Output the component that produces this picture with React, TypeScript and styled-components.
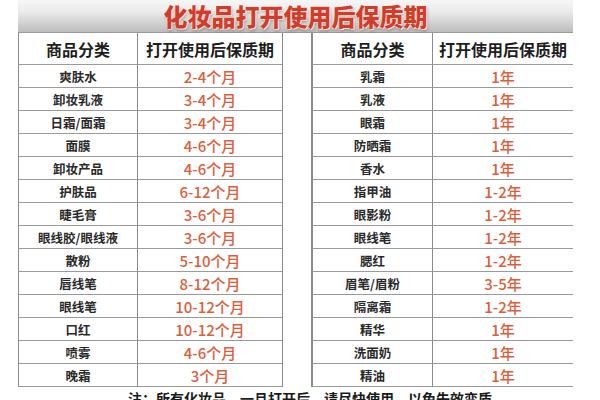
import React from 'react';
import styled, { createGlobalStyle } from 'styled-components';

const GlobalStyle = createGlobalStyle`
  html, body {
    margin: 0;
    padding: 0;
    background: #ffffff;
  }
  body {
    font-family: "Noto Sans CJK SC", "Noto Sans", sans-serif;
  }
`;

const Page = styled.div`
  width: 600px;
  height: 400px;
  overflow: hidden;
  padding-left: 18px;
  box-sizing: border-box;
`;

const Banner = styled.div`
  width: 555px;
  height: 33px;
  box-sizing: border-box;
  border-bottom: 1px solid #9a9a9a;
  background: linear-gradient(to bottom, #f6f6f6 0%, #ececec 35%, #cfcfcf 75%, #bcbcbc 100%);
  display: flex;
  align-items: center;
  justify-content: center;
`;

const Title = styled.h1`
  margin: 0;
  font-size: 24px;
  line-height: 30px;
  font-weight: 900;
  color: #d23d2a;
  text-shadow: 0 0 1px #ffffff, 0 0 2px #ffffff, 1px 1px 0 #f4d6cf, 1px 2px 3px rgba(0, 0, 0, 0.35);
`;

const Grid = styled.div`
  width: 555px;
  display: grid;
  grid-template-columns: 119px 145px 30px 120px 141px;
  grid-template-rows: 32px repeat(14, 23px);
`;

type Kind = 'head' | 'name' | 'value' | 'gap';

const Cell = styled.div<{ $kind: Kind; $first?: boolean }>`
  box-sizing: border-box;
  display: flex;
  align-items: center;
  justify-content: center;
  white-space: nowrap;
  border-left: ${(p) => (p.$first ? '1px solid #8a8a8a' : p.$kind === 'gap' ? '1px solid #8a8a8a' : 'none')};
  border-right: ${(p) => (p.$kind === 'gap' ? '1px solid #8a8a8a' : 'none')};
  border-bottom: ${(p) => (p.$kind === 'gap' ? 'none' : '1px solid #9a9a9a')};
  & + & {
    border-left: ${(p) => (p.$kind === 'value' || p.$kind === 'head' ? '1px solid #8a8a8a' : undefined)};
  }
  font-size: ${(p) => (p.$kind === 'head' ? '16px' : p.$kind === 'value' ? '15px' : '12.5px')};
  font-weight: ${(p) => (p.$kind === 'value' ? 500 : 700)};
  color: ${(p) => (p.$kind === 'value' ? '#d9603c' : p.$kind === 'head' ? '#1e1e1e' : '#2a2a2a')};
`;

const Note = styled.p`
  margin: 2px 0 0 110px;
  font-size: 14px;
  line-height: 18px;
  font-weight: 700;
  color: #1a1a1a;
`;

const left: [string, string][] = [
  ['爽肤水', '2-4个月'],
  ['卸妆乳液', '3-4个月'],
  ['日霜/面霜', '3-4个月'],
  ['面膜', '4-6个月'],
  ['卸妆产品', '4-6个月'],
  ['护肤品', '6-12个月'],
  ['睫毛膏', '3-6个月'],
  ['眼线胶/眼线液', '3-6个月'],
  ['散粉', '5-10个月'],
  ['唇线笔', '8-12个月'],
  ['眼线笔', '10-12个月'],
  ['口红', '10-12个月'],
  ['喷雾', '4-6个月'],
  ['晚霜', '3个月'],
];

const right: [string, string][] = [
  ['乳霜', '1年'],
  ['乳液', '1年'],
  ['眼霜', '1年'],
  ['防晒霜', '1年'],
  ['香水', '1年'],
  ['指甲油', '1-2年'],
  ['眼影粉', '1-2年'],
  ['眼线笔', '1-2年'],
  ['腮红', '1-2年'],
  ['眉笔/眉粉', '3-5年'],
  ['隔离霜', '1-2年'],
  ['精华', '1年'],
  ['洗面奶', '1年'],
  ['精油', '1年'],
];

export default function App() {
  return (
    <>
      <GlobalStyle />
      <Page>
        <Banner>
          <Title>化妆品打开使用后保质期</Title>
        </Banner>
        <Grid>
          <Cell $kind="head" $first>商品分类</Cell>
          <Cell $kind="head">打开使用后保质期</Cell>
          <Cell $kind="gap" />
          <Cell $kind="head">商品分类</Cell>
          <Cell $kind="head">打开使用后保质期</Cell>
          {left.map(([name, value], i) => (
            <React.Fragment key={name + i}>
              <Cell $kind="name" $first>{name}</Cell>
              <Cell $kind="value">{value}</Cell>
              <Cell $kind="gap" />
              <Cell $kind="name">{right[i][0]}</Cell>
              <Cell $kind="value">{right[i][1]}</Cell>
            </React.Fragment>
          ))}
        </Grid>
        <Note>注：所有化妆品，一旦打开后，请尽快使用，以免失效变质。</Note>
      </Page>
    </>
  );
}
